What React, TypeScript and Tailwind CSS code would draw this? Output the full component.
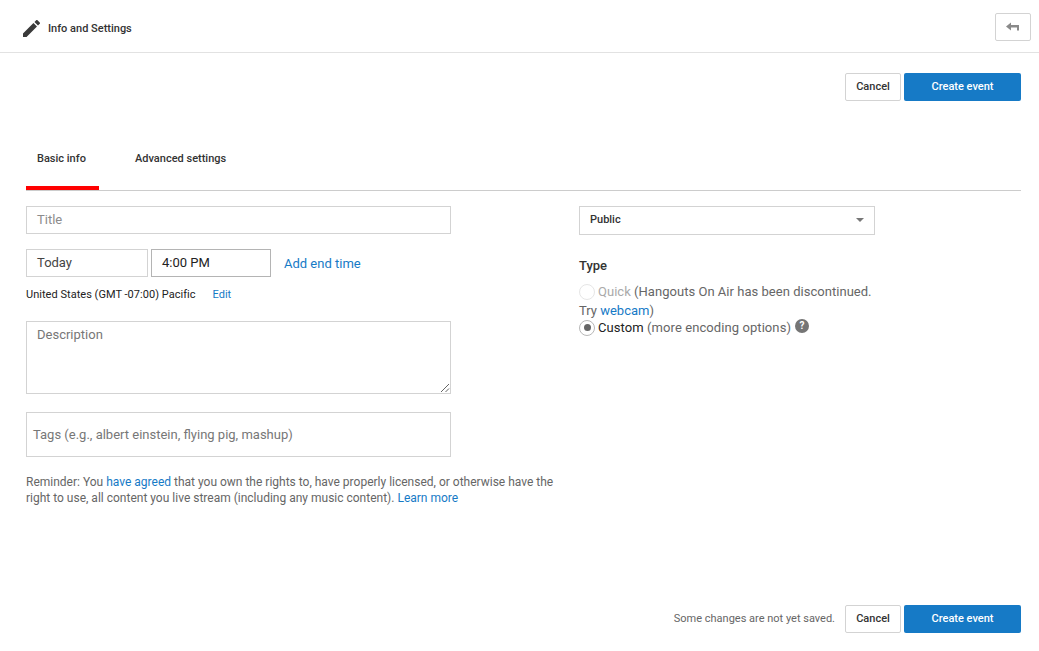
import React from "react";

function Buttons() {
  return (
    <>
      <button className="w-[56px] h-[28px] bg-white border border-[#d3d3d3] rounded-[2px] text-[11px] font-medium text-[#333]">Cancel</button>
      <button className="w-[117px] h-[28px] ml-[3px] bg-[#167ac6] rounded-[2px] text-[11px] font-medium text-white">Create event</button>
    </>
  );
}

function Radio({ checked, faint }: { checked?: boolean; faint?: boolean }) {
  return (
    <span className={`inline-flex w-[16px] h-[16px] rounded-full border items-center justify-center bg-white mr-[3px] shrink-0 ${faint ? "border-[#e6e6e6]" : "border-[#b8b8b8]"}`}>
      {checked && <span className="w-[7px] h-[7px] rounded-full bg-[#666]" />}
    </span>
  );
}

export default function App() {
  return (
    <div className="w-[1039px] h-[651px] bg-white overflow-hidden flex flex-col font-['Roboto',sans-serif] text-[#333]">
      <header className="h-[53px] shrink-0 border-b border-[#e2e2e2] flex items-center pl-[23px] pr-[8px]">
        <svg width="17" height="17" viewBox="3 3 18 18" className="mt-[4px] text-[#3a3a3a]" fill="currentColor">
          <path d="M3 17.25V21h3.75L17.81 9.94l-3.75-3.75L3 17.25zM20.71 7.04a1 1 0 0 0 0-1.41l-2.34-2.34a1 1 0 0 0-1.41 0l-1.83 1.83 3.75 3.75 1.83-1.83z" />
        </svg>
        <span className="ml-[8px] mt-[7px] text-[11px] font-medium">Info and Settings</span>
        <button className="ml-auto mt-[2px] w-[36px] h-[28px] border border-[#d3d3d3] rounded-[2px] bg-white flex items-center justify-center">
          <svg width="14" height="10" viewBox="0 0 14 10" fill="#8a8a8a">
            <path d="M0 4.5 5 0.5V3H13V8.5H11V5.5H5V8.5Z" />
          </svg>
        </button>
      </header>

      <div className="h-[20px] shrink-0" />
      <div className="flex justify-end pr-[18px] shrink-0">
        <Buttons />
      </div>

      <nav className="mt-[46px] ml-[26px] mr-[18px] h-[44px] shrink-0 border-b border-[#cccccc] flex text-[11px] font-medium">
        <div className="w-[73px] h-[43px] border-b-[4px] border-[#ff0000] pl-[11px] pt-[5px] leading-[14px] text-[#333]">Basic info</div>
        <div className="ml-[36px] pt-[5px] leading-[14px]">Advanced settings</div>
      </nav>

      <main className="flex-1 flex pl-[26px] pt-[15px]">
        <section className="w-[528px] shrink-0 flex flex-col">
          <div className="w-[425px] h-[28px] border border-[#d3d3d3] pl-[10px] flex items-center text-[13px] text-[#8c8c8c]">Title</div>
          <div className="mt-[15px] flex items-center text-[13px]">
            <div className="w-[122px] h-[28px] border border-[#d3d3d3] pl-[10px] flex items-center text-[#444]">Today</div>
            <div className="ml-[3px] w-[120px] h-[28px] border border-[#b4b4b4] pl-[10px] flex items-center text-[#222]">4:00 PM</div>
            <a className="ml-[13px] mt-[1px] text-[#167ac6]">Add end time</a>
          </div>
          <div className="mt-[11px] flex items-center h-[14px] text-[11px] text-[#222]">
            <span className="tracking-[0.03px]">United States (GMT -07:00) Pacific</span>
            <a className="ml-[17px] text-[#167ac6]">Edit</a>
          </div>
          <div className="mt-[19px] w-[425px] h-[73px] border border-[#d3d3d3] relative pl-[10px] pt-[5px] text-[13px] leading-[15px] text-[#777]">
            Description
            <svg className="absolute right-[0px] bottom-[0px]" width="10" height="10" viewBox="0 0 10 10" stroke="#666" strokeWidth="1" fill="none">
              <path d="M1 9 9 1M5.5 9 9 5.5" />
            </svg>
          </div>
          <div className="mt-[18px] w-[425px] h-[45px] border border-[#d3d3d3] pl-[6px] flex items-center text-[13px] text-[#777]">
            Tags (e.g., albert einstein, flying pig, mashup)
          </div>
          <p className="mt-[17px] text-[12px] leading-[16px] text-[#666]">
            Reminder: You <a className="text-[#167ac6]">have agreed</a> that you own the rights to, have properly licensed, or otherwise have the right to use, all content you live stream (including any music content). <a className="text-[#167ac6]">Learn more</a>
          </p>
        </section>

        <section className="ml-[25px] w-[300px] flex flex-col">
          <div className="w-[296px] h-[29px] border border-[#d3d3d3] pl-[10px] pr-[10px] flex items-center justify-between text-[11px] font-medium text-[#333]">
            <span>Public</span>
            <span className="mb-[1px] w-0 h-0 border-x-[4px] border-x-transparent border-t-[4px] border-t-[#777]" />
          </div>
          <div className="mt-[23px] text-[13px] font-medium leading-[16px] text-[#333]">Type</div>
          <div className="mt-[9px] text-[13px] leading-[17px] text-[#666] w-[296px]">
            <div className="flex items-center">
              <Radio faint />
              <span className="tracking-[0.03px]"><span className="text-[#aaa]">Quick</span> (Hangouts On Air has been discontinued.</span>
            </div>
            <div className="mt-[3px] leading-[16px]">Try <a className="text-[#167ac6]">webcam</a>)</div>
            <div className="flex items-center">
              <Radio checked />
              <span className="tracking-[0.08px]"><span className="text-[#222]">Custom</span> (more encoding options)</span>
              <span className="ml-[4px] mb-[3px] w-[14px] h-[14px] rounded-full bg-[#757575] text-white text-[10px] font-bold leading-[14px] text-center">?</span>
            </div>
          </div>
        </section>
      </main>

      <footer className="shrink-0 flex items-center justify-end pr-[18px] pb-[18px]">
        <span className="mr-[10px] mt-[1px] text-[11px] text-[#666]">Some changes are not yet saved.</span>
        <Buttons />
      </footer>
    </div>
  );
}
